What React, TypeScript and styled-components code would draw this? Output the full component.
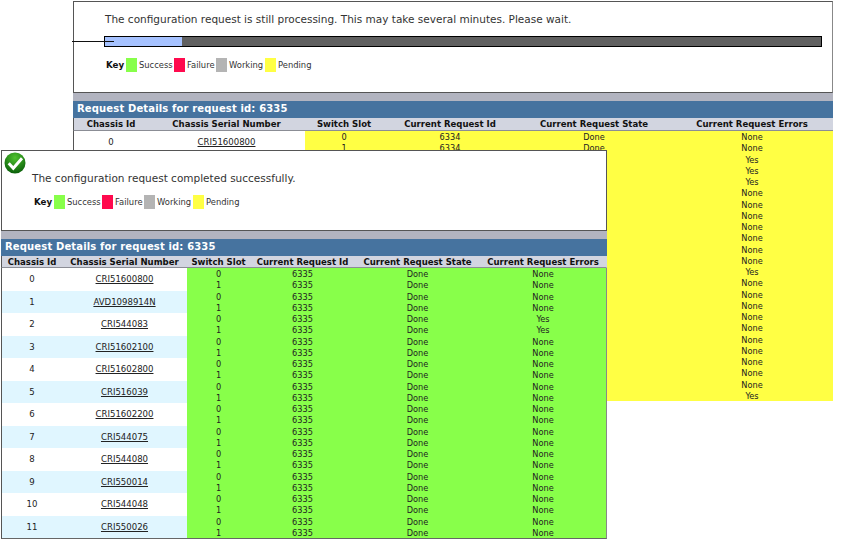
import React from "react";
import styled, { createGlobalStyle } from "styled-components";

const Global = createGlobalStyle`
  html, body { margin: 0; padding: 0; background: #fff; }
  body { width: 847px; height: 543px; overflow: hidden; position: relative; font-family: "DejaVu Sans", Verdana, sans-serif; color: #111; }
`;

const Desktop = styled.div`
  position: relative;
  width: 847px;
  height: 543px;
  overflow: hidden;
  background: #fff;
`;

const Window = styled.section<{ $x: number; $y: number; $w: number; $z: number }>`
  position: absolute;
  left: ${(p) => p.$x}px;
  top: ${(p) => p.$y}px;
  width: ${(p) => p.$w}px;
  z-index: ${(p) => p.$z};
  display: flex;
  flex-direction: column;
`;

const Panel = styled.div<{ $h: number; $right: string }>`
  position: relative;
  height: ${(p) => p.$h}px;
  box-sizing: border-box;
  border: 1px solid #555;
  border-right-color: ${(p) => p.$right};
  background: #fff;
`;

const Message = styled.p<{ $left: number; $top: number }>`
  margin: 0;
  padding: ${(p) => p.$top}px 0 0 ${(p) => p.$left}px;
  font-size: 10.5px;
  line-height: 13px;
  color: #333;
  white-space: nowrap;
`;

const ProgressTrack = styled.div`
  display: flex;
  box-sizing: border-box;
  margin: 10px 0 0 30px;
  width: 718px;
  height: 11px;
  border: 1px solid #000;
  background: #606060;
`;

const ProgressFill = styled.div`
  width: 77px;
  background: #a6c2ff;
`;

const StrayLine = styled.div`
  position: absolute;
  left: -2px;
  top: 39px;
  width: 42px;
  height: 1px;
  background: #111;
`;

const KeyRow = styled.div<{ $left: number; $top: number }>`
  display: flex;
  align-items: center;
  margin: ${(p) => p.$top}px 0 0 ${(p) => p.$left}px;
  height: 14px;
`;

const KeyTitle = styled.strong`
  font-size: 8.7px;
  width: 20px;
  color: #111;
`;

const Swatch = styled.span<{ $c: string }>`
  width: 11px;
  height: 14px;
  background: ${(p) => p.$c};
  margin-right: 2px;
`;

const KeyLabel = styled.span<{ $w: number }>`
  font-size: 8.4px;
  width: ${(p) => p.$w}px;
  color: #333;
  white-space: nowrap;
`;

const Band = styled.div`
  height: 8px;
  background: #b2b4c0;
`;

const Title = styled.h2`
  margin: 0;
  height: 17px;
  padding-left: 4px;
  background: #46739f;
  color: #fff;
  font-size: 10px;
  line-height: 16px;
  font-weight: bold;
  letter-spacing: 0.15px;
  white-space: nowrap;
`;

const Grid = styled.div<{ $cols: string; $full: boolean }>`
  display: grid;
  grid-template-columns: ${(p) => p.$cols};
  grid-auto-rows: 11.25px;
  border-left: 1px solid #555;
  ${(p) => (p.$full ? "border-right: 1px solid #888; border-bottom: 1px solid #666;" : "")}
`;

const HeaderRow = styled.div<{ $cols: string; $h: number; $full: boolean }>`
  display: grid;
  grid-template-columns: ${(p) => p.$cols};
  height: ${(p) => p.$h}px;
  background: #d2d5e0;
  border-bottom: 1px solid #8b8d95;
  border-left: 1px solid #555;
  ${(p) => (p.$full ? "border-right: 1px solid #d2d5e0;" : "")}
`;

const HeaderCell = styled.div`
  font-size: 8.55px;
  line-height: 13px;
  font-weight: bold;
  text-align: center;
  color: #111;
  white-space: nowrap;
`;

const ChassisCell = styled.div<{ $alt: boolean; $col: number }>`
  grid-row: span 2;
  grid-column: ${(p) => p.$col};
  display: flex;
  align-items: center;
  justify-content: center;
  font-size: 8.55px;
  color: #222;
  background: ${(p) => (p.$alt ? "#e0f6ff" : "#fff")};
`;

const Serial = styled.a`
  font-size: 8.55px;
  color: #222;
  text-decoration: underline;
`;

const DataCell = styled.div<{ $bg: string; $first?: boolean }>`
  background: ${(p) => p.$bg};
  ${(p) => (p.$first ? "grid-column: 3;" : "")}
  font-size: 8.2px;
  line-height: 12px;
  text-align: center;
  color: #222;
  white-space: nowrap;
`;

const CheckIcon = styled.svg`
  position: absolute;
  left: 2px;
  top: 1px;
  width: 22px;
  height: 22px;
`;

const GREEN = "#88ff4a";
const YELLOW = "#ffff44";
const RED = "#ff0a4e";
const GREY = "#b4b4b4";

const frontSerials = [
  "CRI51600800", "AVD1098914N", "CRI544083", "CRI51602100", "CRI51602800", "CRI516039",
  "CRI51602200", "CRI544075", "CRI544080", "CRI550014", "CRI544048", "CRI550026",
];
const backErrors = [
  "None","None","Yes","Yes","Yes","None","None","None","None","None","None","None",
  "Yes","None","None","None","None","None","None","None","None","None","None","Yes",
];
const frontErrors = Array.from({ length: 24 }, (_, i) => (i === 4 || i === 5 ? "Yes" : "None"));
const heads = ["Chassis Id", "Chassis Serial Number", "Switch Slot", "Current Request Id", "Current Request State", "Current Request Errors"];

const Key: React.FC<{ left: number; top: number }> = ({ left, top }) => (
  <KeyRow $left={left} $top={top}>
    <KeyTitle>Key</KeyTitle>
    <Swatch $c={GREEN} /><KeyLabel $w={35}>Success</KeyLabel>
    <Swatch $c={RED} /><KeyLabel $w={29}>Failure</KeyLabel>
    <Swatch $c={GREY} /><KeyLabel $w={36}>Working</KeyLabel>
    <Swatch $c={YELLOW} /><KeyLabel $w={40}>Pending</KeyLabel>
  </KeyRow>
);

const Details: React.FC<{
  cols: string; reqId: string; errors: string[]; bg: string; serials: string[]; full: boolean; headH: number; visibleRows: number;
}> = ({ cols, reqId, errors, bg, serials, full, headH, visibleRows }) => (
  <>
    <HeaderRow $cols={cols} $h={headH} $full={full}>
      {heads.map((h) => <HeaderCell key={h}>{h}</HeaderCell>)}
    </HeaderRow>
    <Grid $cols={cols} $full={full}>
      {Array.from({ length: 24 }, (_, i) => {
        const row = Math.floor(i / 2);
        const seen = i < visibleRows;
        return (
          <React.Fragment key={i}>
            {i % 2 === 0 && (
              <ChassisCell $alt={row % 2 === 1} $col={1}>{seen ? row : ""}</ChassisCell>
            )}
            {i % 2 === 0 && (
              <ChassisCell $alt={row % 2 === 1} $col={2}>
                {seen && <Serial>{serials[row]}</Serial>}
              </ChassisCell>
            )}
            <DataCell $bg={bg} $first>{seen ? i % 2 : ""}</DataCell>
            <DataCell $bg={bg}>{seen ? reqId : ""}</DataCell>
            <DataCell $bg={bg}>{seen ? "Done" : ""}</DataCell>
            <DataCell $bg={bg}>{errors[i]}</DataCell>
          </React.Fragment>
        );
      })}
    </Grid>
  </>
);

export default function App() {
  return (
    <Desktop>
      <Global />
      <Window $x={73} $y={1} $w={760} $z={1}>
        <Panel $h={92} $right="#888">
          <Message $left={31} $top={11}>The configuration request is still processing. This may take several minutes. Please wait.</Message>
          <ProgressTrack><ProgressFill /></ProgressTrack>
          <StrayLine />
          <Key left={32} top={11} />
        </Panel>
        <Band />
        <Title>Request Details for request id: 6335</Title>
        <Details cols="74px 157px 78px 134px 154px 162px" reqId="6334" errors={backErrors} bg={YELLOW} serials={["CRI51600800"]} full={false} headH={12} visibleRows={2} />
      </Window>
      <Window $x={1} $y={150} $w={606} $z={2}>
        <Panel $h={81} $right="#555">
          <CheckIcon viewBox="0 0 22 22">
            <defs>
              <radialGradient id="g" cx="50%" cy="25%" r="75%">
                <stop offset="0%" stopColor="#4fc22e" />
                <stop offset="100%" stopColor="#0a5f0a" />
              </radialGradient>
            </defs>
            <circle cx="11" cy="11" r="10.5" fill="url(#g)" />
            <path d="M4.7 11.3L9.3 16.3L18 6.3" fill="none" stroke="#fff" strokeWidth="3" />
          </CheckIcon>
          <Message $left={30} $top={21}>The configuration request completed successfully.</Message>
          <Key left={32} top={10} />
        </Panel>
        <Band />
        <Title>Request Details for request id: 6335</Title>
        <Details cols="60px 125px 63px 105px 125px 126px" reqId="6335" errors={frontErrors} bg={GREEN} serials={frontSerials} full headH={11} visibleRows={24} />
      </Window>
    </Desktop>
  );
}
